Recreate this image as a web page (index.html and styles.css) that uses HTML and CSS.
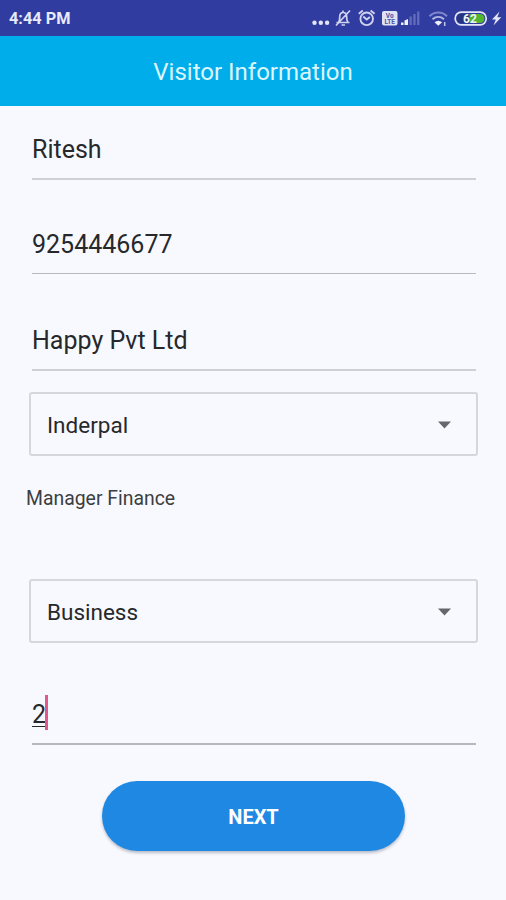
FILE: index.html
```html
<!DOCTYPE html>
<html lang="en">
<head>
    <meta charset="UTF-8">
    <meta name="viewport" content="width=device-width, initial-scale=1.0">
    <title>Visitor Information</title>
    <link rel="stylesheet" href="styles.css">
</head>
<body>
    <!-- Status bar -->
    <div class="status-bar">
        <span class="time">4:44 PM</span>
        <svg class="status-icons" width="194" height="36" viewBox="312 0 194 36" fill="none">
            <!-- More -->
            <g fill="#e4e6f8">
                <circle cx="314.5" cy="22.7" r="2.200"/>
                <circle cx="320.8" cy="22.7" r="2.200"/>
                <circle cx="327.1" cy="22.7" r="2.200"/>
            </g>
            <!-- Muted bell -->
            <g stroke="#cfd2ee" stroke-width="1.700">
                <path d="M336.500 22.500h13M338.500 22c1.200-1 1.200-3 1.200-5 0-6 7-6 7 0 0 2 0 4 1.200 5M341.500 25h3.500M343 10.500v2M350 10.500l-14 15"/>
            </g>
            <!-- Alarm -->
            <g stroke="#cfd2ee" stroke-width="1.900">
                <circle cx="366.700" cy="18.800" r="6.300"/>
                <path d="M358.800 13.700l4-3.200M374.600 13.700l-4-3.200M363.300 16.500l3.400 3 3.200-2.500"/>
            </g>
            <!-- VoLTE -->
            <rect x="382" y="11" width="15.500" height="14.500" rx="2" fill="#e0e2f4"/>
            <text x="389.700" y="17.800" class="volte">Vo</text>
            <text x="389.700" y="24.200" class="volte">LTE</text>
            <!-- Signal -->
            <path d="M401 25v-2.500h2.500V25zM404.500 25v-4.500l3.500-1.500V25z" fill="#eef0fc"/>
            <path d="M409.500 25v-8.500h2.300V25zM413.300 25V14h2.300v11zM417.100 25V11.500h2.300V25z" fill="#646bbb"/>
            <!-- Wifi -->
            <g stroke-width="2">
                <path d="M429.500 16.300c5-5 12.500-5 17.500 0" stroke="#7f86ca"/>
                <path d="M432.500 19.300c3.500-3 8-3 11.500 0" stroke="#b3b7e1"/>
            </g>
            <path d="M434.500 22.300q3.800-3 7.600 0l-3.800 3.400z" fill="#eef0fc"/>
            <path d="M444.700 22v4" stroke="#c3c6e8" stroke-width="1.500"/>
            <!-- Battery -->
            <rect x="455.200" y="12.200" width="31" height="12.600" rx="6" stroke="#e4e6f8" stroke-width="1.700"/>
            <path d="M468 14h12a4.500 4.500 0 0 1 0 9H468z" fill="#52b531"/>
            <path d="M461.500 14h8v9h-8a4.500 4.500 0 0 1 0-9z" fill="#26357f"/>
            <text x="470" y="22.600" class="level">62</text>
            <path d="M499.500 11.500l-7.500 8h3.800l-2.300 6 7.800-8.300h-4z" fill="#e4e6f8"/>
        </svg>
    </div>

    <header class="app-bar">
        <h1>Visitor Information</h1>
    </header>

    <!-- Visitor form -->
    <form class="visitor-form">
        <div class="field field-name">Ritesh</div>
        <div class="field field-phone">9254446677</div>
        <div class="field field-company">Happy Pvt Ltd</div>

        <div class="select select-person">
            <span>Inderpal</span>
            <svg class="arrow" width="13" height="8" viewBox="0 0 13 8"><path d="M0 0.500h13L6.500 7.500z" fill="#65676a"/></svg>
        </div>
        <p class="designation">Manager Finance</p>

        <div class="select select-purpose">
            <span>Business</span>
            <svg class="arrow" width="13" height="8" viewBox="0 0 13 8"><path d="M0 0.500h13L6.500 7.500z" fill="#65676a"/></svg>
        </div>

        <div class="field field-count"><span class="typed">2</span><span class="caret"></span></div>

        <button type="button" class="next-btn">NEXT</button>
    </form>
</body>
</html>
```
FILE: styles.css
```css
* {
    margin: 0;
    padding: 0;
    box-sizing: border-box;
}

body {
    font-family: Roboto, sans-serif;
    background-color: #f8f9fe;
    color: #26282b;
    height: 900px;
    overflow: hidden;
}

.status-bar {
    display: flex;
    justify-content: space-between;
    align-items: center;
    height: 36px;
    padding-left: 9px;
    background-color: #303c9f;
}

.time {
    font-size: 16.3px;
    font-weight: bold;
    line-height: 20px;
    padding-top: 2px;
    color: #e8eafa;
}

.volte {
    font-size: 6.5px;
    font-weight: bold;
    fill: #4a52a5;
    text-anchor: middle;
}

.level {
    font-size: 12px;
    font-weight: bold;
    fill: #f0f5f0;
    text-anchor: middle;
}

.app-bar {
    display: flex;
    justify-content: center;
    align-items: center;
    height: 70px;
    padding-top: 2px;
    background-color: #00adeb;
}

h1 {
    font-size: 24px;
    font-weight: normal;
    color: #dcf6fd;
}

.visitor-form {
    display: flex;
    flex-direction: column;
    padding: 0 28px 0 29px;
}

.field {
    display: flex;
    align-items: center;
    margin: 0 2px 0 3px;
    font-size: 25px;
    border-bottom: 2px solid #cfd0d5;
}

.field-name {
    height: 74px;
    padding-top: 14px;
}

.field-phone {
    height: 94px;
    padding-top: 36px;
    border-bottom: 1px solid #b9babf;
}

.field-company {
    height: 97px;
    padding-top: 37px;
}

.select {
    display: flex;
    justify-content: space-between;
    align-items: center;
    height: 64px;
    padding: 2px 25px 0 16px;
    font-size: 22.5px;
    border: 2px solid #d6d7dc;
    border-radius: 3px;
}

.select-person {
    margin-top: 21px;
}

.designation {
    height: 24px;
    margin: 31px 0 0 -3px;
    font-size: 19.4px;
    line-height: 24px;
    color: #3c3e41;
}

.select-purpose {
    margin-top: 68px;
}

.field-count {
    height: 102px;
    padding-top: 39px;
    border-bottom: 2px solid #b7b8bd;
}

.typed {
    padding-top: 3px;
    text-decoration: underline;
    text-decoration-thickness: 1px;
    text-underline-offset: 3px;
}

.caret {
    width: 3px;
    height: 35px;
    margin-left: -1px;
    background-color: #e0588c;
}

.next-btn {
    align-self: center;
    width: 303px;
    height: 70px;
    margin-top: 36px;
    padding-top: 2px;
    font-family: inherit;
    font-size: 20px;
    font-weight: bold;
    color: #fff;
    background-color: #1e88e3;
    border: none;
    border-radius: 35px;
    box-shadow: 0 2px 3px rgba(40, 50, 80, 0.3);
    cursor: pointer;
}
```
